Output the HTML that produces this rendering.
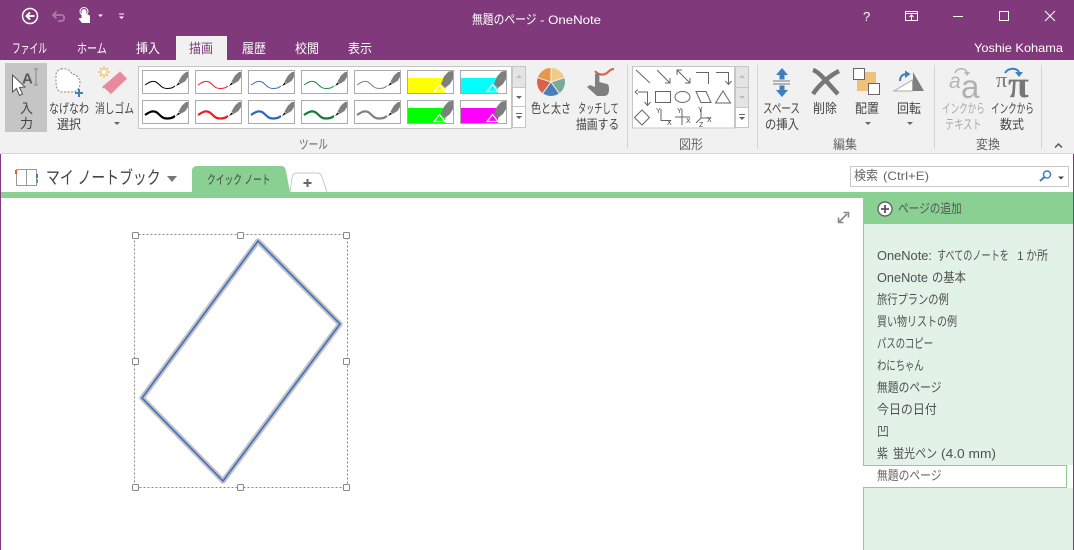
<!DOCTYPE html>
<html lang="ja"><head><meta charset="utf-8"><title>OneNote</title>
<style>
html,body{margin:0;padding:0;width:1074px;height:550px;overflow:hidden;background:#fff}
svg{display:block;font-family:"Liberation Sans","Noto Sans CJK JP",sans-serif;font-size:13px}
.r{fill:#444}.g{fill:#666}.t{fill:#fff}.s{fill:#505050}.d{fill:#a8a8a8}
</style></head><body>
<svg width="1074" height="550" viewBox="0 0 1074 550" xmlns="http://www.w3.org/2000/svg">
<defs>
<g id="pen"><path d="M36.500 11.500L40 5.500 44 2 46 2 46 7 43.500 11 38.500 14Z" fill="#7f7f7f"/><path d="M34 16L36.500 12.500 38 14Z" fill="#000"/></g>
<path id="w1" fill="none" stroke-width="1" d="M3 15C6 13 10 10 14 12S19 18.500 25 18.500 31 17 33 16"/>
<path id="w2" fill="none" stroke-width="2.200" d="M3 15C6 13 10 10 14 12S19 18.500 25 18.500 31 17 33 16"/>
<g id="hlp"><path d="M27 21.500L32.500 14.500 38 21.500Z" fill="none" stroke="#fff" stroke-width="1.300"/><path d="M34 14L37 6.500 41.500 1.500 46 1 46 9 43 14 38 18Z" fill="#7f7f7f"/></g>
</defs>

<rect width="1074" height="60" fill="#80397b"/>
<rect y="60" width="1074" height="93" fill="#f1f1f1"/>
<rect y="153" width="1074" height="1" fill="#d6d6d6"/>
<rect x="0" y="154" width="1" height="396" fill="#80397b"/>
<rect x="1073" y="154" width="1" height="396" fill="#80397b"/>

<!-- quick access -->
<circle cx="30" cy="16" r="7.500" fill="none" stroke="#fff" stroke-width="1.500"/>
<path d="M34.500 16H26.500M30 12.500L26.500 16 30 19.500" fill="none" stroke="#fff" stroke-width="2"/>
<path d="M53 15H61.500C65 15 65 21 61.500 21H58M56.500 11.500L53 15 56.500 18.500" fill="none" stroke="#a97ca6" stroke-width="1.800"/>
<path d="M81.500 11a2.600 2.600 0 0 1 5 0V14L90 15.500V23H82L78.500 18.500 81.500 18Z" fill="#fff"/>
<circle cx="84" cy="11.500" r="4" fill="none" stroke="#fff"/>
<path d="M98 14.500h5l-2.500 2.500Z" fill="#fff"/>
<path d="M119 13.500h5v1h-5ZM119 16.500h5l-2.500 2.500Z" fill="#fff"/>

<text transform="translate(472 24) scale(.83 1)" class="t">無題のページ</text>
<text x="540" y="24" font-size="12" textLength="61" lengthAdjust="spacingAndGlyphs" class="t">- OneNote</text>

<!-- window controls -->
<text x="863" y="21" class="t" font-size="13">?</text>
<rect x="905.500" y="11.500" width="12" height="9" fill="none" stroke="#fff"/><path d="M905 13.500H918M911.500 20V15.500M909.500 17L911.500 15 913.500 17" fill="none" stroke="#fff"/>
<rect x="953" y="16" width="10" height="1" fill="#fff"/>
<rect x="999.500" y="11.500" width="9" height="9" fill="none" stroke="#fff"/>
<path d="M1045 11L1055 21M1055 11L1045 21" stroke="#fff" stroke-width="1.100"/>

<!-- tabs -->
<rect x="176" y="36" width="51" height="24" fill="#f1f1f1"/>
<text transform="translate(12 53) scale(.673 1)" class="t">ファイル</text>
<text transform="translate(77 53) scale(.77 1)" class="t">ホーム</text>
<text transform="translate(136 53) scale(.923 1)" class="t">挿入</text>
<text transform="translate(189 53) scale(.923 1)" fill="#80397b">描画</text>
<text transform="translate(242 53) scale(.923 1)" class="t">履歴</text>
<text transform="translate(295 53) scale(.923 1)" class="t">校閲</text>
<text transform="translate(348 53) scale(.923 1)" class="t">表示</text>
<text x="974" y="52" font-size="12" textLength="89" lengthAdjust="spacingAndGlyphs" class="t">Yoshie Kohama</text>

<!-- input button -->
<rect x="5" y="63" width="42" height="69" fill="#c5c5c5"/>
<path d="M12.500 75L12.500 92 16.500 88.500 19.500 95.500 22.500 94 19.500 87.500 25 87Z" fill="#fff" stroke="#555" stroke-width="1"/>
<text x="22" y="83.500" font-size="15" font-weight="bold" fill="#5a5a5a" font-family="Liberation Sans">A</text>
<path d="M34 69h4M34 85h4M36 69V85" stroke="#888" fill="none"/>
<text x="20" y="113" class="r">入</text>
<text x="20" y="128" class="r">力</text>

<!-- lasso -->
<path d="M61 69C66 68 70 70 72 74 76 74 80 78 80 83 80 89 76 92 71 92H62C58 92 56 88 56 82V75C56 72 58 70 61 69Z" fill="#fff" stroke="#888" stroke-dasharray="2 1.500"/>
<path d="M75 93h8M79 89v8" stroke="#3f7fbf" stroke-width="2"/>
<text transform="translate(49 113) scale(.77 1)" class="r">なげなわ</text>
<text transform="translate(57 129) scale(.923 1)" class="r">選択</text>

<!-- eraser -->
<path d="M104 66v12M98 72h12M100 68l8 8M108 68l-8 8" stroke="#f0c66e" stroke-width="1.600"/>
<circle cx="104" cy="72" r="2.200" fill="#fff"/>
<path d="M102 87L120 71.500 127 78.500 110 95Z" fill="#e98a9c"/>
<path d="M104 88.500L110.500 94.500" stroke="#fff" stroke-width="1"/>
<text transform="translate(95 113) scale(.75 1)" class="r">消しゴム</text>
<path d="M114 122h6l-3 3Z" fill="#666"/>

<!-- ink gallery -->
<rect x="138.500" y="66.500" width="373" height="62" fill="#fff" stroke="#c6c6c6"/>
<g fill="none" stroke="#ababab">
<rect x="142.500" y="70.500" width="46" height="23"/><rect x="195.500" y="70.500" width="46" height="23"/><rect x="248.500" y="70.500" width="46" height="23"/><rect x="301.500" y="70.500" width="46" height="23"/><rect x="354.500" y="70.500" width="46" height="23"/><rect x="407.500" y="70.500" width="46" height="23"/><rect x="460.500" y="70.500" width="46" height="23"/>
<rect x="142.500" y="100.500" width="46" height="23"/><rect x="195.500" y="100.500" width="46" height="23"/><rect x="248.500" y="100.500" width="46" height="23"/><rect x="301.500" y="100.500" width="46" height="23"/><rect x="354.500" y="100.500" width="46" height="23"/><rect x="407.500" y="100.500" width="46" height="23"/><rect x="460.500" y="100.500" width="46" height="23"/>
</g>
<g stroke="#000"><use href="#w1" x="142" y="70"/></g><use href="#pen" x="142" y="70"/>
<g stroke="#ed1c24"><use href="#w1" x="195" y="70"/></g><use href="#pen" x="195" y="70"/>
<g stroke="#3a6fc4"><use href="#w1" x="248" y="70"/></g><use href="#pen" x="248" y="70"/>
<g stroke="#178a3f"><use href="#w1" x="301" y="70"/></g><use href="#pen" x="301" y="70"/>
<g stroke="#808080"><use href="#w1" x="354" y="70"/></g><use href="#pen" x="354" y="70"/>
<rect x="408" y="78" width="37" height="15" fill="#ff0"/><use href="#hlp" x="407" y="70"/>
<rect x="461" y="78" width="37" height="15" fill="#0ff"/><use href="#hlp" x="460" y="70"/>

<g stroke="#000"><use href="#w2" x="142" y="100"/></g><use href="#pen" x="142" y="100"/>
<g stroke="#ed1c24"><use href="#w2" x="195" y="100"/></g><use href="#pen" x="195" y="100"/>
<g stroke="#2f65bd"><use href="#w2" x="248" y="100"/></g><use href="#pen" x="248" y="100"/>
<g stroke="#0f7c36"><use href="#w2" x="301" y="100"/></g><use href="#pen" x="301" y="100"/>
<g stroke="#808080"><use href="#w2" x="354" y="100"/></g><use href="#pen" x="354" y="100"/>
<rect x="408" y="108" width="37" height="15" fill="#0f0"/><use href="#hlp" x="407" y="100"/>
<rect x="461" y="108" width="37" height="15" fill="#f0f"/><use href="#hlp" x="460" y="100"/>

<rect x="512.500" y="66.500" width="13" height="21" fill="#e4e4e4" stroke="#c6c6c6"/>
<rect x="512.500" y="87.500" width="13" height="19" fill="#fff" stroke="#c6c6c6"/>
<rect x="512.500" y="106.500" width="13" height="21" fill="#fff" stroke="#c6c6c6"/>
<path d="M516 78h6l-3-3Z" fill="#bbb"/><path d="M516 96h6l-3 3Z" fill="#666"/>
<path d="M516 113h6v1h-6ZM516 116h6l-3 3Z" fill="#666"/>

<!-- colour and thickness -->
<path d="M551 82L551 68A14 14 0 0 0 537.700 77.700Z" fill="#e8974a"/>
<path d="M551 82L551 68A14 14 0 0 1 564.300 77.700Z" fill="#efcb86"/>
<path d="M551 82L564.300 77.700A14 14 0 0 1 559.200 93.300Z" fill="#7bab98"/>
<path d="M551 82L559.200 93.300A14 14 0 0 1 542.800 93.300Z" fill="#4a7ebb"/>
<path d="M551 82L542.800 93.300A14 14 0 0 1 537.700 77.700Z" fill="#d8634a"/>
<path d="M551 68V82L537.700 77.700M551 82L564.300 77.700M551 82L559.200 93.300M551 82L542.800 93.300" stroke="#f1f1f1" fill="none"/>
<text transform="translate(531 113) scale(.77 1)" class="r">色と太さ</text>

<!-- touch draw -->
<path d="M595 71C598 75 604 76 608 72 610 70 612 69 614 69" fill="none" stroke="#d8634a" stroke-width="2.200"/>
<path d="M595 75a2.200 2.200 0 0 1 4.400 0V82L607 84C609 85 609 87 609 90 609 94 607 96 604 96H597L587 87 590 85 595 87Z" fill="#7f7f7f"/>
<text transform="translate(578 113) scale(.63 1)" class="r">タッチして</text>
<text transform="translate(576 129) scale(.83 1)" class="r">描画する</text>

<rect x="627" y="65" width="1" height="84" fill="#d4d4d4"/>
<text transform="translate(299 149) scale(.74 1)" class="g">ツール</text>

<!-- shapes gallery -->
<rect x="632.500" y="66.500" width="102" height="61.500" fill="#fff" stroke="#c6c6c6"/>
<g fill="none" stroke="#666" stroke-width="1">
<path d="M636 70L650 83"/>
<path d="M657 70L670 83M665 83H670V78"/>
<path d="M677 70L690 83M677 75V70H682M685 83H690V78"/>
<path d="M696 72.500H708.500V84"/>
<path d="M716 72.500H728.500V84M725.500 81L728.500 84.500 731.500 81"/>
<path d="M638 92H647.500V105M635 92L638 89.500M635 92L638 94.500M644.500 102L647.500 105.500 650.500 102"/>
<rect x="655.500" y="91.500" width="15" height="11"/>
<ellipse cx="682.500" cy="97" rx="7.500" ry="5.500"/>
<path d="M696 91.500H706L711 102.500H701Z"/>
<path d="M723 91L730.500 103H715.500Z"/>
<path d="M642 110L649.500 117.500 642 125 634.500 117.500Z"/>
<path d="M661 109V120.500H671"/>
<path d="M682 109V125M675 117H690"/>
<path d="M701 109V118L696 123M701 118H711"/>
</g>
<g font-size="7" fill="#444"><text x="656" y="113">Y</text><text x="667" y="125">X</text><text x="677" y="113">Y</text><text x="686" y="123">X</text><text x="698" y="112">Y</text><text x="707" y="122">X</text><text x="699" y="127">Z</text></g>
<rect x="735.500" y="66.500" width="13" height="21" fill="#e4e4e4" stroke="#c6c6c6"/>
<rect x="735.500" y="87.500" width="13" height="20" fill="#e4e4e4" stroke="#c6c6c6"/>
<rect x="735.500" y="107.500" width="13" height="20" fill="#fff" stroke="#c6c6c6"/>
<path d="M739 78h6l-3-3Z" fill="#bbb"/><path d="M739 96h6l-3 3Z" fill="#bbb"/>
<path d="M739 114h6v1h-6ZM739 117h6l-3 3Z" fill="#666"/>
<text transform="translate(679 149) scale(.923 1)" class="g">図形</text>
<rect x="757" y="65" width="1" height="84" fill="#d4d4d4"/>

<!-- edit group -->
<path d="M782 68L788 75H784.500V79.500H779.500V75H776Z" fill="#3f7fbf"/>
<path d="M773 81H790M773 84H790" stroke="#777"/>
<path d="M782 97L788 90H784.500V85.500H779.500V90H776Z" fill="#3f7fbf"/>
<text transform="translate(763 113) scale(.73 1)" class="r">スペース</text>
<text transform="translate(765 129) scale(.87 1)" class="r">の挿入</text>
<path d="M813 70C820 72 830 86 838 94M839 71C829 76 819 85 813 94" fill="none" stroke="#777" stroke-width="4.500"/>
<text transform="translate(813 113) scale(.923 1)" class="r">削除</text>
<rect x="857" y="72" width="19" height="19" fill="#efc27a"/>
<rect x="853.500" y="68.500" width="11" height="11" fill="#fff" stroke="#666"/>
<rect x="868.500" y="83.500" width="11" height="11" fill="#fff" stroke="#666"/>
<text transform="translate(855 113) scale(.923 1)" class="r">配置</text>
<path d="M865 122h6l-3 3Z" fill="#666"/>
<path d="M913 72L924 91H913Z" fill="#7f7f7f"/>
<path d="M894 91H912.500V80Z" fill="#fff" stroke="#aaa"/>
<path d="M900 81C900 76 903 74 907 74" fill="none" stroke="#3f7fbf" stroke-width="2"/>
<path d="M905 70.500L910.500 74 905 78Z" fill="#3f7fbf"/>
<text transform="translate(897 113) scale(.923 1)" class="r">回転</text>
<path d="M907 122h6l-3 3Z" fill="#666"/>
<text transform="translate(833 149) scale(.923 1)" class="g">編集</text>
<rect x="934" y="65" width="1" height="84" fill="#d4d4d4"/>

<!-- ink to text / math -->
<text x="949" y="88" font-size="21" font-style="italic" fill="#b5b5b5" font-family="Liberation Sans">a</text>
<text x="961" y="98" font-size="33" fill="#b0b0b0" font-family="Liberation Sans">a</text>
<path d="M955 73C957 68 964 67 967 72" fill="none" stroke="#b5b5b5" stroke-width="1.500"/><path d="M964 72h6l-3 4Z" fill="#b5b5b5"/>
<text transform="translate(942 113) scale(.66 1)" class="d">インクから</text>
<text transform="translate(945 129) scale(.71 1)" class="d">テキスト</text>
<text x="996" y="87" font-size="22" fill="#777" font-family="Liberation Serif">π</text>
<text x="1008" y="97" font-size="38" font-weight="bold" fill="#777" font-family="Liberation Serif">π</text>
<path d="M1005 73C1008 68 1016 67 1019 72" fill="none" stroke="#3f7fbf" stroke-width="2"/><path d="M1015 72h8l-4 5Z" fill="#3f7fbf"/>
<text transform="translate(991 113) scale(.66 1)" class="r">インクから</text>
<text transform="translate(1000 129) scale(.923 1)" class="r">数式</text>
<text transform="translate(976 149) scale(.923 1)" class="g">変換</text>
<rect x="1041" y="65" width="1" height="84" fill="#d4d4d4"/>
<path d="M1055 147.500L1058.500 144 1062 147.500" fill="none" stroke="#555" stroke-width="1.500"/>

<!-- notebook row -->
<path d="M16.500 169.500V185.500H36.500V169.500H26.500V185.500M16.500 169.500H26.500" fill="none" stroke="#999"/>
<rect x="15" y="170" width="2" height="4" fill="#d8582f"/><rect x="36" y="174" width="2" height="4" fill="#3f7fbf"/><rect x="36" y="179" width="2" height="4" fill="#5aa58f"/>
<text transform="translate(46 184) scale(.77 1)" font-size="18" fill="#444">マイ ノートブック</text>
<path d="M167 176h10l-5 6Z" fill="#777"/>

<path d="M290 192L286 171C285.500 168 284 166 281 166H197C194 166 192 168 192 171V192Z" fill="#8ad093"/>
<text transform="translate(207 184) scale(.7 1)" font-size="12.500" fill="#444">クイック ノート</text>
<path d="M290 192L292 178C292.500 175 294 173 297 173H317C320 173 321.500 175 322 177L327 192" fill="#fff" stroke="#c8c8c8"/>
<path d="M303.500 183h8M307.500 179v8" stroke="#666" stroke-width="2"/>

<rect x="850.500" y="166.500" width="218" height="20" fill="#fff" stroke="#c8c8c8"/>
<text transform="translate(854 180) scale(.923 1)" fill="#666">検索</text>
<text x="883" y="180" font-size="12" textLength="46" lengthAdjust="spacingAndGlyphs" fill="#666">(Ctrl+E)</text>
<circle cx="1047" cy="174.500" r="3.500" fill="none" stroke="#3f7fbf" stroke-width="1.500"/>
<path d="M1044.500 177L1040 181" stroke="#3f7fbf" stroke-width="2"/>
<path d="M1058 176.500h6l-3 3Z" fill="#444"/>

<rect x="1" y="192" width="1072" height="6" fill="#8ad093"/>

<!-- expand icon -->
<path d="M839.500 221.500L847 214M843.500 212.500H848.500V217.500M838.500 217.500V222.500H843.500" fill="none" stroke="#888" stroke-width="1.600"/>

<!-- drawing -->
<path d="M258 241L340 324 223 481 142 398Z" fill="#fff" stroke="#c2c2c2" stroke-width="5.500" stroke-linejoin="round"/>
<path d="M258 241L340 324 223 481 142 398Z" fill="none" stroke="#3f6fc4" stroke-width="1.600"/>
<rect x="134.500" y="234.500" width="213" height="253" fill="none" stroke="#888" stroke-dasharray="2 2"/>
<g fill="#fff" stroke="#888">
<rect x="132.500" y="232.500" width="6" height="6" rx="1"/><rect x="237.500" y="232.500" width="6" height="6" rx="1"/><rect x="343.500" y="232.500" width="6" height="6" rx="1"/>
<rect x="132.500" y="358.500" width="6" height="6" rx="1"/><rect x="343.500" y="358.500" width="6" height="6" rx="1"/>
<rect x="132.500" y="484.500" width="6" height="6" rx="1"/><rect x="237.500" y="484.500" width="6" height="6" rx="1"/><rect x="343.500" y="484.500" width="6" height="6" rx="1"/>
</g>

<!-- page list -->
<rect x="863" y="198" width="210" height="26" fill="#8ad093"/>
<rect x="863" y="224" width="210" height="326" fill="#e3f2e6"/>
<rect x="863" y="224" width="1" height="326" fill="#8ad093"/>
<circle cx="885" cy="209" r="7" fill="#fff" stroke="#555" stroke-width="1.200"/>
<path d="M881 209h8M885 205v8" stroke="#555" stroke-width="1.800"/>
<text transform="translate(898 213) scale(.82 1)" fill="#555">ページの追加</text>
<text x="877" y="260" textLength="55" lengthAdjust="spacingAndGlyphs" class="s">OneNote:</text>
<text transform="translate(937 260) scale(.7 1)" class="s">すべてのノートを</text>
<text x="1017" y="260" font-size="12" class="s">1</text>
<text transform="translate(1026 260) scale(.85 1)" class="s">か所</text>
<text x="877" y="282" textLength="51" lengthAdjust="spacingAndGlyphs" class="s">OneNote</text>
<text transform="translate(932 282) scale(.87 1)" class="s">の基本</text>
<text transform="translate(877 304) scale(.79 1)" class="s">旅行プランの例</text>
<text transform="translate(877 326) scale(.77 1)" class="s">買い物リストの例</text>
<text transform="translate(877 348) scale(.72 1)" class="s">パスのコピー</text>
<text transform="translate(877 370) scale(.72 1)" class="s">わにちゃん</text>
<text transform="translate(877 392) scale(.83 1)" class="s">無題のページ</text>
<text transform="translate(877 414) scale(.92 1)" class="s">今日の日付</text>
<text transform="translate(877 436) scale(.92 1)" class="s">凹</text>
<text transform="translate(877 458) scale(.85 1)" class="s">紫</text>
<text transform="translate(893 458) scale(.85 1)" class="s">蛍光ペン</text>
<text x="941" y="458" textLength="55" lengthAdjust="spacingAndGlyphs" class="s">(4.0 mm)</text>
<rect x="863.500" y="465.500" width="203" height="22" fill="#fff" stroke="#8ad093"/>
<rect x="863" y="466" width="1" height="21" fill="#fff"/>
<rect x="1067" y="465" width="6" height="23" fill="#fff"/>
<text transform="translate(877 480) scale(.83 1)" fill="#666">無題のページ</text>
</svg>
</body></html>
